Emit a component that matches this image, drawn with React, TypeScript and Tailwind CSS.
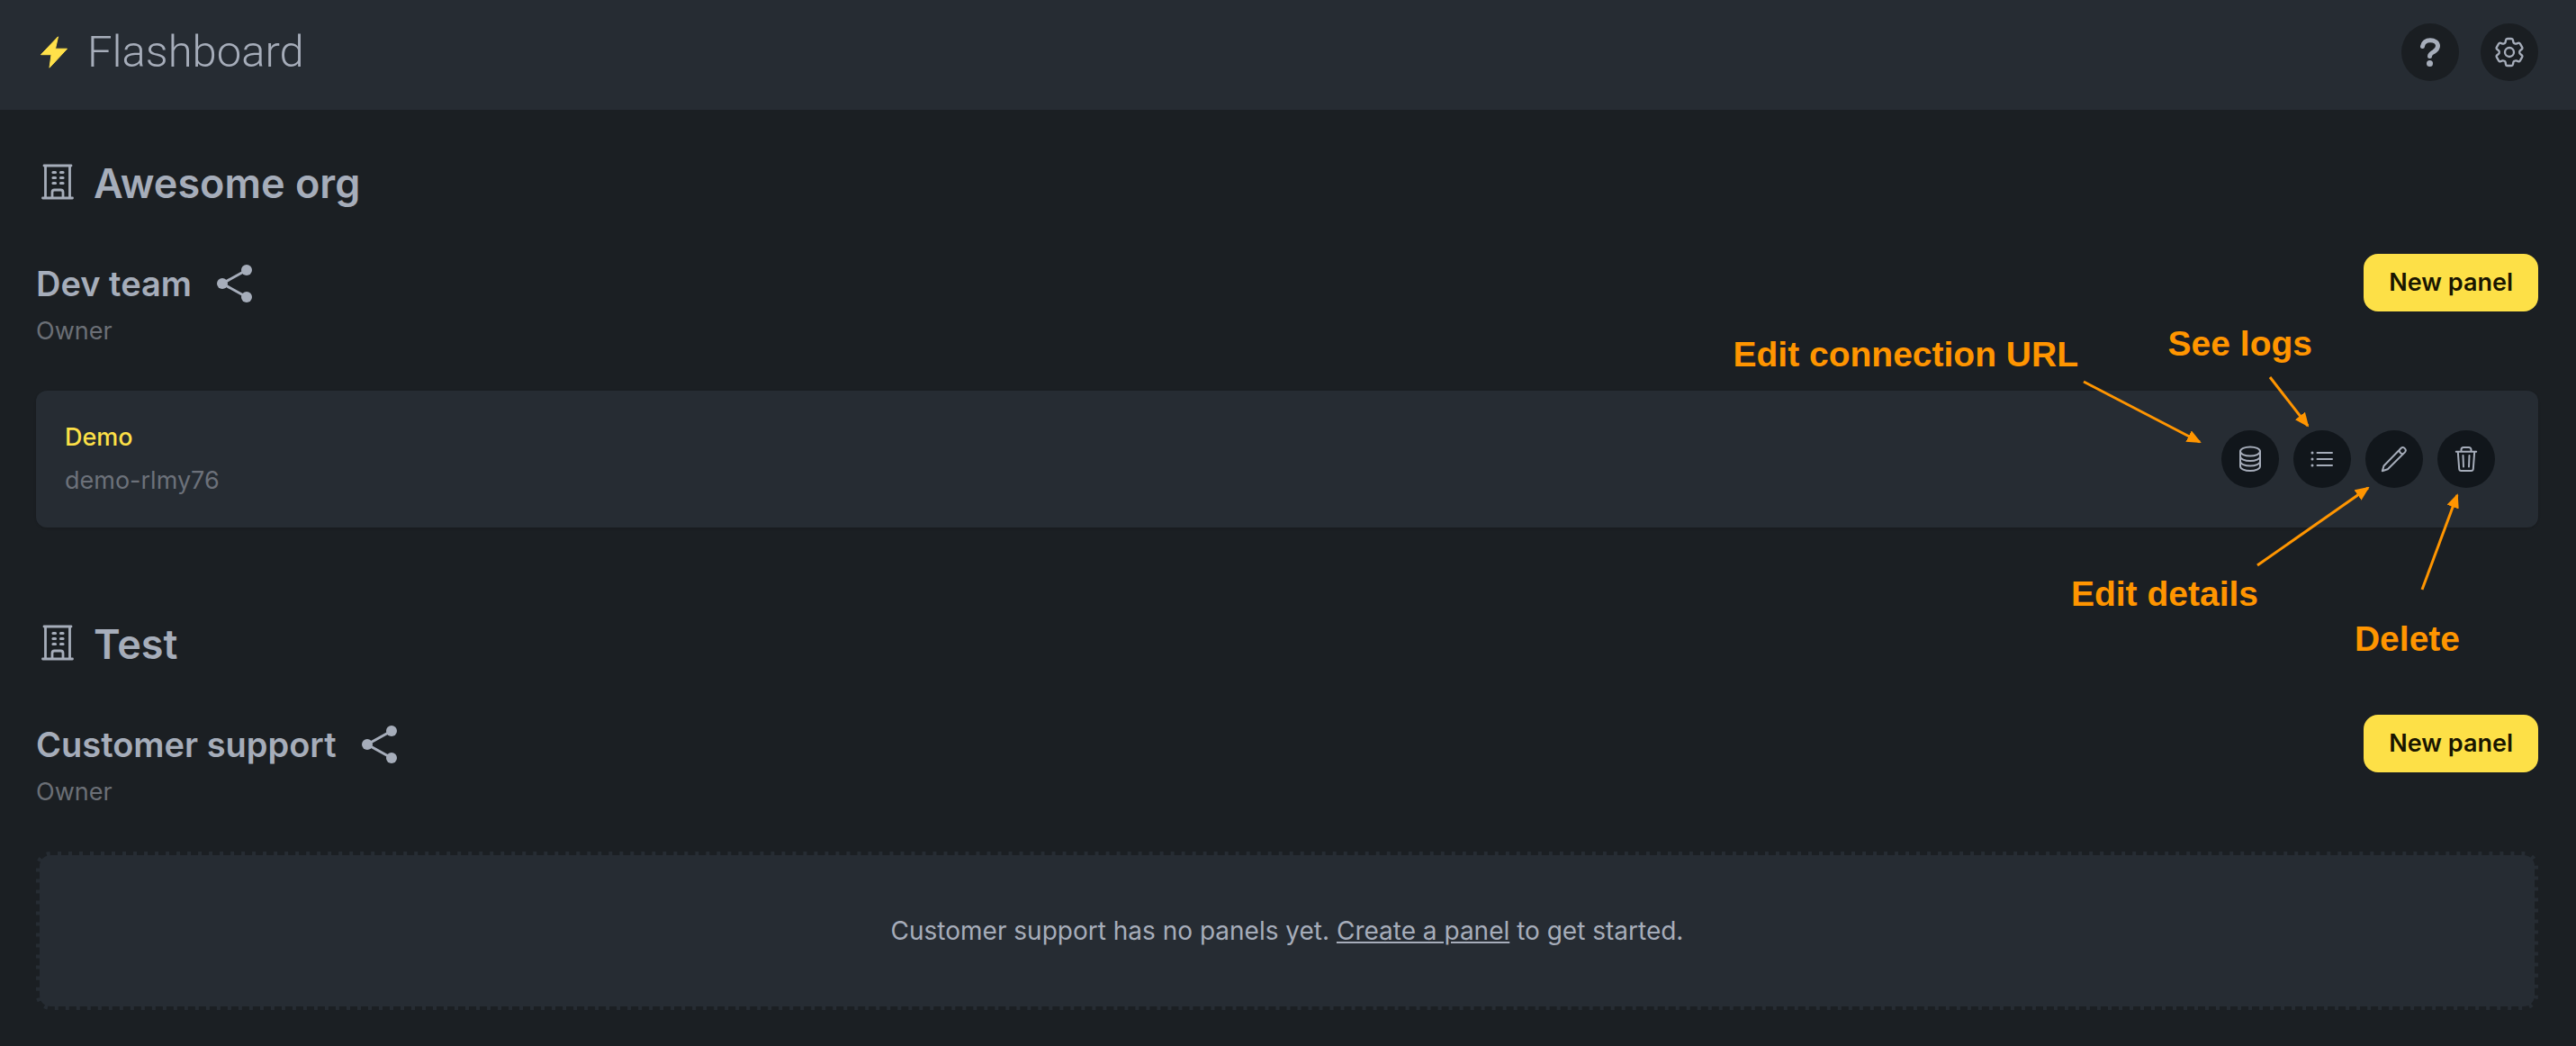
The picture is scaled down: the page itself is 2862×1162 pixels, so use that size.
import type { ReactNode } from 'react';
import { HiOutlineCog6Tooth } from 'react-icons/hi2';

function Bolt() {
  return (
    <svg viewBox="0 0 30 36" className="h-9 w-[30px]" fill="#ffe14a" stroke="#ffe14a" strokeWidth="1" strokeLinejoin="round" aria-hidden="true">
      <path d="M19.500 .8 .5 20.700H12L10 35.200 29.500 14.200H16.500Z" />
    </svg>
  );
}

function Building() {
  return (
    <svg viewBox="0 0 36 40" className="h-10 w-9" fill="none" stroke="currentColor" strokeWidth="2.800" strokeLinecap="round" aria-hidden="true">
      <path d="M3 2H33M4.500 2V37M31.500 2V37M1.500 38H34.500M12 37V31.500a2.500 2.500 0 0 1 2.500-2.500H21.500a2.500 2.500 0 0 1 2.500 2.500V37" />
      <path d="M13 9.500h2.500M21.500 9.500h2.500M13 15.500h2.500M21.500 15.500h2.500M13 21.500h2.500M21.500 21.500h2.500" strokeWidth="3.200" />
    </svg>
  );
}

function Share() {
  return (
    <svg viewBox="0 0 40 42" className="h-[42px] w-10" fill="currentColor" stroke="currentColor" aria-hidden="true">
      <path d="M33 6 6 21 33 36" fill="none" strokeWidth="3" />
      <g stroke="none">
        <circle cx="33" cy="6" r="6" />
        <circle cx="6" cy="21" r="6" />
        <circle cx="33" cy="36" r="6" />
      </g>
    </svg>
  );
}

function Glyph({ children }: { children: ReactNode }) {
  return (
    <svg viewBox="0 0 32 32" className="size-8" fill="none" stroke="currentColor" strokeWidth="2" strokeLinecap="round" strokeLinejoin="round" aria-hidden="true">
      {children}
    </svg>
  );
}

const glyphs = {
  help: (
    <Glyph>
      <path d="M7.500 9.500C8 5 11.500 2.700 16 2.700c4.800 0 8.500 2.600 8.500 6.400 0 3-1.800 4.700-4.300 6.300C17.100 17 15.500 18 15.500 20.500" strokeWidth="5" />
      <circle cx="15.500" cy="28.500" r="3.500" fill="currentColor" stroke="none" />
    </Glyph>
  ),
  settings: <HiOutlineCog6Tooth className="size-10" strokeWidth={1.4} aria-hidden="true" />,
  database: (
    <Glyph>
      <ellipse cx="16" cy="7.500" rx="11" ry="5" />
      <path d="M5 7.500v16.500c0 2.800 4.900 5 11 5s11-2.200 11-5V7.500" />
      <path d="M5 13c0 2.800 4.900 5 11 5s11-2.200 11-5M5 18.500c0 2.800 4.900 5 11 5s11-2.200 11-5" />
    </Glyph>
  ),
  logs: (
    <Glyph>
      <path d="M10.500 9H27M10.500 16H27M10.500 23H27" />
      <path d="M5 9h.01M5 16h.01M5 23h.01" strokeWidth="3" />
    </Glyph>
  ),
  edit: (
    <Glyph>
      <path d="M2.800 29.200 4.500 23.500 23.500 4c2.800-2.800 7 1.600 4.400 4.400L8.800 27.200ZM21.800 5.800c-.3 2.600 1.600 4.600 4.300 4.400" />
    </Glyph>
  ),
  trash: (
    <Glyph>
      <path d="M4.800 7.700h22.400M10.500 7.500V5.500a2.500 2.500 0 0 1 2.500-2.500h6a2.500 2.500 0 0 1 2.500 2.500v2M6.800 8l1.400 19a2.200 2.200 0 0 0 2.200 2h11.200a2.200 2.200 0 0 0 2.200-2L25.200 8M12.500 12l.5 12.500M19.500 12l-.5 12.500" />
    </Glyph>
  ),
};

function RoundButton({ label, dark, children }: { label: string; dark?: boolean; children: ReactNode }) {
  return (
    <button type="button" aria-label={label} className={`flex size-16 items-center justify-center rounded-full ${dark ? 'bg-[#11161b]' : 'bg-[#1a1e22]'}`}>
      {children}
    </button>
  );
}

function Section({ org, team, children }: { org: string; team: string; children: ReactNode }) {
  return (
    <section className="mb-[98px]">
      <h1 className="flex h-16 items-center gap-[22px] pl-1.5 text-[45px] font-semibold">
        <span className="pb-1"><Building /></span>
        {org}
      </h1>
      <div className="mt-[46px] flex items-start justify-between">
        <div>
          <div className="flex h-[66px] items-center gap-7">
            <h2 className="text-[38px] leading-[48px] font-semibold">{team}</h2>
            <button type="button" aria-label={`Share ${team}`}><Share /></button>
          </div>
          <p className="mt-1 text-[27px] leading-8 text-[#6b6f76]">Owner</p>
        </div>
        <button type="button" className="h-16 rounded-2xl bg-[#fde047] px-7 text-[27px] font-semibold text-[#191500]">New panel</button>
      </div>
      {children}
    </section>
  );
}

const notes = [
  { text: 'Edit connection URL', place: 'top-[370px] right-[553px]' },
  { text: 'See logs', place: 'top-[358px] right-[293px]' },
  { text: 'Edit details', place: 'top-[636px] right-[353px]' },
  { text: 'Delete', place: 'top-[686px] right-[129px]' },
];

function Annotations() {
  return (
    <div className="pointer-events-none font-['Liberation_Sans',sans-serif] text-[39px] leading-[48px] font-bold text-[#ff9500]">
      {notes.map((n) => (
        <span key={n.text} className={`absolute whitespace-nowrap ${n.place}`}>{n.text}</span>
      ))}
      <svg viewBox="0 0 482 260" className="absolute top-[410px] right-[80px] h-[260px] w-[482px]" fill="none" stroke="#ff9500" strokeWidth="3" aria-hidden="true">
        <defs>
          <marker id="head" viewBox="0 0 16 14" refX="14" refY="7" markerWidth="16" markerHeight="14" markerUnits="userSpaceOnUse" orient="auto">
            <path d="M0 0 16 7 0 14Z" fill="#ff9500" stroke="none" />
          </marker>
        </defs>
        <path d="M15 14 144 81" markerEnd="url(#head)" />
        <path d="M222 9 264 63" markerEnd="url(#head)" />
        <path d="M208 218 331 132" markerEnd="url(#head)" />
        <path d="M391 245 430 140" markerEnd="url(#head)" />
      </svg>
    </div>
  );
}

export default function App() {
  return (
    <div className="relative min-h-screen bg-[#1b1f23] font-['Inter',sans-serif] text-[#a6adba]">
      <header className="flex items-start justify-between bg-[#262c33] pt-[26px] pr-[42px] pb-8 pl-10">
        <a href="#" className="flex h-16 items-center gap-[22px] pl-[5px]">
          <Bolt />
          <span className="font-['Roboto',sans-serif] text-[49px] font-light">Flashboard</span>
        </a>
        <div className="flex gap-6">
          <RoundButton label="Help">{glyphs.help}</RoundButton>
          <RoundButton label="Settings">{glyphs.settings}</RoundButton>
        </div>
      </header>
      <main className="pt-[50px] pr-[42px] pl-10">
        <Section org="Awesome org" team="Dev team">
          <div className="mt-[50px] flex h-[152px] items-center justify-between rounded-xl bg-[#262c33] pr-12 pl-8 shadow-sm">
            <div className="text-[27px] leading-8">
              <a href="#" className="block font-medium text-[#fde047]">Demo</a>
              <p className="mt-4 text-[#6c717a]">demo-rlmy76</p>
            </div>
            <div className="flex gap-4">
              <RoundButton dark label="Edit connection URL">{glyphs.database}</RoundButton>
              <RoundButton dark label="See logs">{glyphs.logs}</RoundButton>
              <RoundButton dark label="Edit details">{glyphs.edit}</RoundButton>
              <RoundButton dark label="Delete">{glyphs.trash}</RoundButton>
            </div>
          </div>
        </Section>
        <Section org="Test" team="Customer support">
          <div className="mt-[50px] flex h-44 items-center justify-center rounded-2xl border-4 border-dashed border-[#1b1f23] bg-[#262c33] text-[28px] leading-8">
            <p>
              Customer support has no panels yet. <a href="#" className="underline">Create a panel</a> to get started.
            </p>
          </div>
        </Section>
      </main>
      <Annotations />
    </div>
  );
}
